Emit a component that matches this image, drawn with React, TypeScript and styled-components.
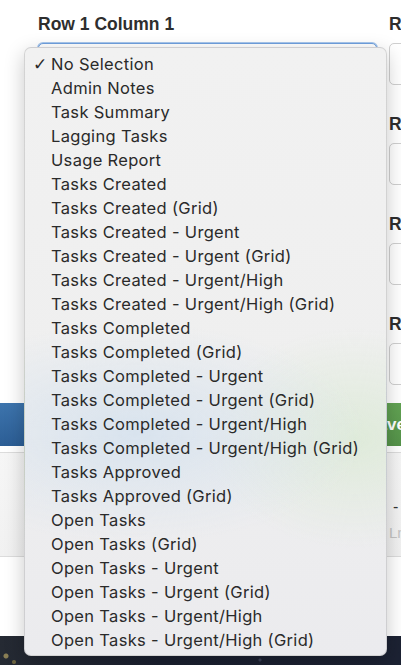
import React from 'react';
import styled, { createGlobalStyle } from 'styled-components';

const REPORTS = [
  'No Selection',
  'Admin Notes',
  'Task Summary',
  'Lagging Tasks',
  'Usage Report',
  'Tasks Created',
  'Tasks Created (Grid)',
  'Tasks Created - Urgent',
  'Tasks Created - Urgent (Grid)',
  'Tasks Created - Urgent/High',
  'Tasks Created - Urgent/High (Grid)',
  'Tasks Completed',
  'Tasks Completed (Grid)',
  'Tasks Completed - Urgent',
  'Tasks Completed - Urgent (Grid)',
  'Tasks Completed - Urgent/High',
  'Tasks Completed - Urgent/High (Grid)',
  'Tasks Approved',
  'Tasks Approved (Grid)',
  'Open Tasks',
  'Open Tasks (Grid)',
  'Open Tasks - Urgent',
  'Open Tasks - Urgent (Grid)',
  'Open Tasks - Urgent/High',
  'Open Tasks - Urgent/High (Grid)',
];

const ROWS = [1, 2, 3, 4];

const GlobalStyle = createGlobalStyle`
  html, body {
    margin: 0;
    padding: 0;
    background: #ffffff;
    overflow: hidden;
  }
  body {
    font-family: 'Liberation Sans', Arial, sans-serif;
  }
`;

const Page = styled.div`
  position: relative;
  width: 100%;
  height: 665px;
  overflow: hidden;
`;

const FieldGrid = styled.div`
  display: grid;
  grid-template-columns: 339px 339px;
  column-gap: 12px;
  row-gap: 28px;
  padding: 13px 0 0 38px;
`;

const Field = styled.div`
  display: flex;
  flex-direction: column;
  gap: 8px;
`;

const Label = styled.label`
  font-size: 17.5px;
  line-height: 22px;
  font-weight: 700;
  color: #2e2e2e;
  white-space: nowrap;
`;

const SelectBox = styled.div<{ $focused?: boolean }>`
  height: 42px;
  box-sizing: border-box;
  border-radius: 5px;
  background: #ffffff;
  border: 1px solid ${(p) => (p.$focused ? '#6fa0de' : '#cfcfcf')};
  box-shadow: ${(p) => (p.$focused ? '0 0 0 1px #a9c8ee' : 'none')};
`;

const ButtonRow = styled.div`
  display: grid;
  grid-template-columns: 1fr 1fr;
  gap: 8px;
  width: 512px;
  margin-top: 18px;
`;

const Button = styled.button<{ $tone: 'blue' | 'green' }>`
  height: 43px;
  border: none;
  color: #ffffff;
  font-family: inherit;
  font-size: 17px;
  font-weight: 700;
  background: ${(p) =>
    p.$tone === 'blue'
      ? 'linear-gradient(#3d74ad, #2c5e95)'
      : 'linear-gradient(#62a353, #55934a)'};
`;

const Summary = styled.div`
  margin-top: 6px;
  height: 103px;
  border-top: 1px solid #dcdcdc;
  border-bottom: 1px solid #dcdcdc;
  background: linear-gradient(#f6f6f6, #f1f1f1);
  display: grid;
  grid-template-columns: 339px 339px;
  column-gap: 12px;
  padding-left: 38px;
`;

const SummaryCell = styled.div`
  display: flex;
  flex-direction: column;
  padding: 44px 0 0 4px;
  gap: 6px;
`;

const Dash = styled.span`
  font-size: 16px;
  line-height: 20px;
  color: #333333;
`;

const Muted = styled.span`
  font-size: 15px;
  line-height: 20px;
  color: #c4c4c4;
  margin-left: -4px;
`;

const Backdrop = styled.div`
  margin-top: 79px;
  height: 40px;
  background:
    radial-gradient(circle at 6px 20px, #8a7f55 0 2px, transparent 3px),
    radial-gradient(circle at 14px 26px, #6c6440 0 1.5px, transparent 2.5px),
    radial-gradient(circle at 120px 18px, #3c4258 0 1px, transparent 2px),
    radial-gradient(circle at 260px 24px, #3a4056 0 1px, transparent 2px),
    linear-gradient(90deg, #252a33, #1b2030 40%, #1c2233);
`;

const Menu = styled.ul`
  position: absolute;
  left: 24px;
  top: 47px;
  width: 363px;
  height: 609px;
  box-sizing: border-box;
  margin: 0;
  padding: 4px 0 5px;
  list-style: none;
  border-radius: 7px;
  border: 1px solid rgba(0, 0, 0, 0.12);
  box-shadow: 0 6px 20px rgba(0, 0, 0, 0.22);
  background:
    radial-gradient(ellipse 230px 110px at 110px 385px, rgba(214, 226, 238, 0.9), transparent),
    radial-gradient(ellipse 150px 110px at 330px 390px, rgba(220, 234, 214, 0.85), transparent),
    linear-gradient(#f1f1f1 0%, #efefef 55%, #ebebee 100%);
`;

const Item = styled.li`
  display: grid;
  grid-template-columns: 19px 1fr;
  align-items: center;
  height: 24px;
  padding-left: 7px;
  font-family: Inter, 'Liberation Sans', sans-serif;
  font-size: 16.5px;
  letter-spacing: 0.32px;
  color: #2a2a2a;
  white-space: nowrap;
`;

const Check = styled.span`
  font-family: 'DejaVu Sans', sans-serif;
  font-size: 17px;
  color: #2a2a2a;
  margin-left: 1px;
`;

export default function App() {
  return (
    <Page>
      <GlobalStyle />
      <FieldGrid>
        {ROWS.map((row) => (
          <React.Fragment key={row}>
            <Field>
              <Label>Row {row} Column 1</Label>
              <SelectBox $focused={row === 1} />
            </Field>
            <Field>
              <Label>Row {row} Column 2</Label>
              <SelectBox />
            </Field>
          </React.Fragment>
        ))}
      </FieldGrid>
      <ButtonRow>
        <Button $tone="blue">Cancel</Button>
        <Button $tone="green">Save</Button>
      </ButtonRow>
      <Summary>
        <SummaryCell />
        <SummaryCell>
          <Dash>-</Dash>
          <Muted>Ln</Muted>
        </SummaryCell>
      </Summary>
      <Backdrop />
      <Menu>
        {REPORTS.map((name, i) => (
          <Item key={name}>
            <Check>{i === 0 ? '✓' : ''}</Check>
            <span>{name}</span>
          </Item>
        ))}
      </Menu>
    </Page>
  );
}
